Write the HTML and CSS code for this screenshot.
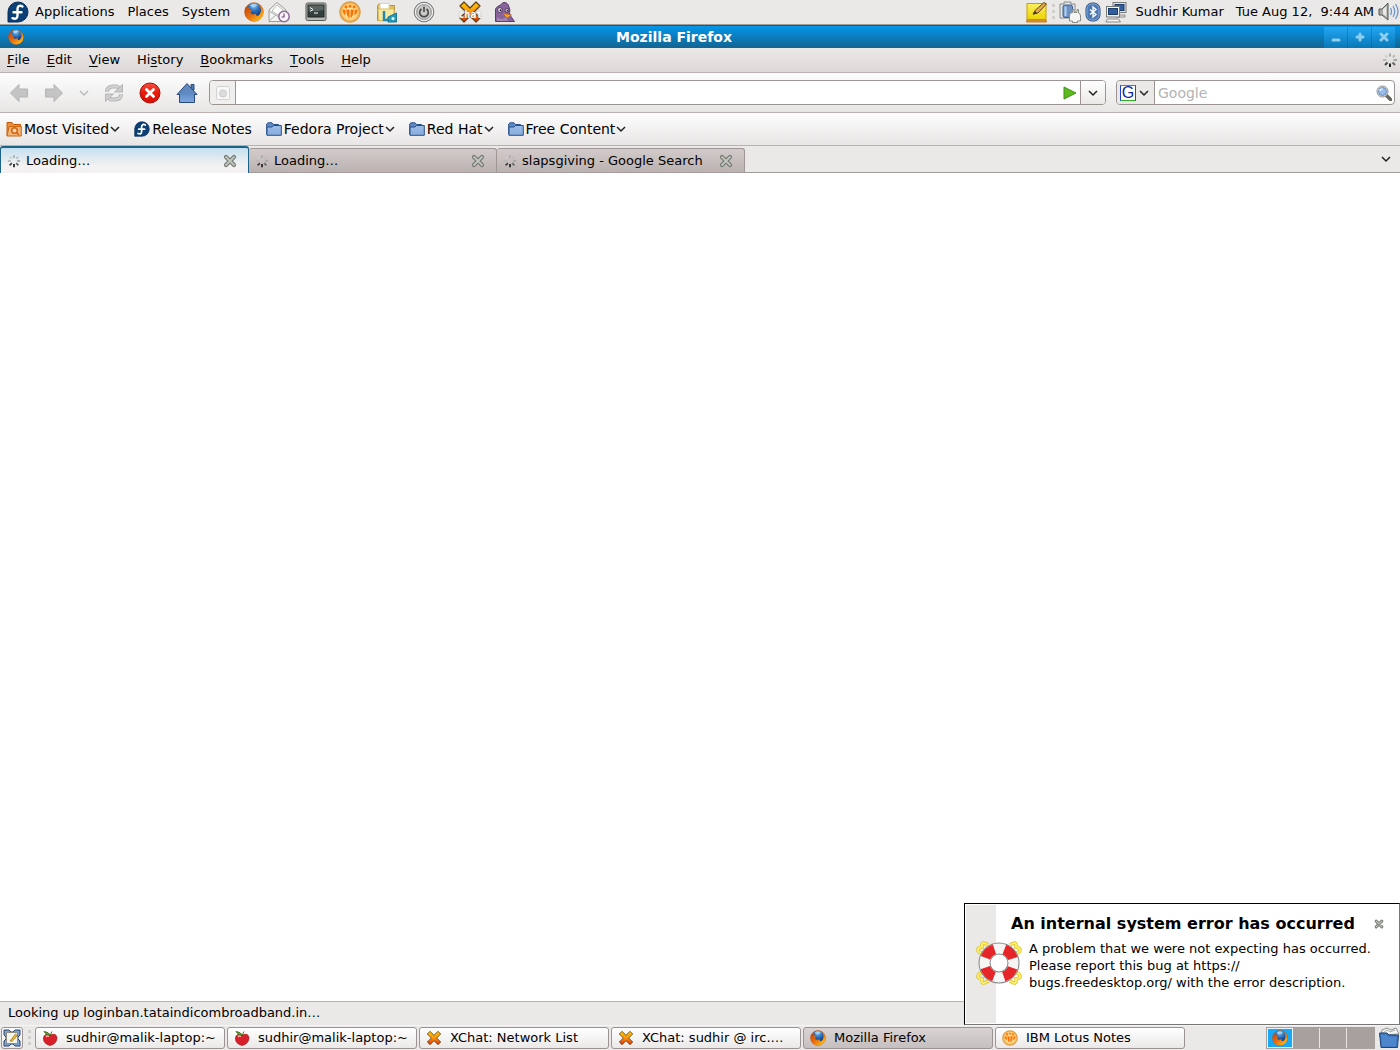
FILE: index.html
```html
<!DOCTYPE html>
<html lang="en">
<head>
<meta charset="utf-8">
<title>Mozilla Firefox</title>
<link rel="stylesheet" href="styles.css">
</head>
<body>
<svg class="sprite" aria-hidden="true">
  <defs>
    <linearGradient id="gOrange" x1="0" y1="0" x2="0" y2="1"><stop offset="0" stop-color="#ffc800"/><stop offset=".5" stop-color="#f99410"/><stop offset="1" stop-color="#e02a08"/></linearGradient>
    <linearGradient id="gFox" x1="0" y1="0" x2="1" y2="1"><stop offset="0" stop-color="#c2410b"/><stop offset=".5" stop-color="#e8720e"/><stop offset="1" stop-color="#ffd21e"/></linearGradient>
    <radialGradient id="gGlobe" cx=".5" cy=".2" r=".8"><stop offset="0" stop-color="#7cc0f0"/><stop offset=".5" stop-color="#2668b4"/><stop offset="1" stop-color="#0d2a66"/></radialGradient>
    <linearGradient id="gBlue" x1="0" y1="0" x2="0" y2="1"><stop offset="0" stop-color="#5c8bc8"/><stop offset="1" stop-color="#7ea6dc"/></linearGradient>
    <linearGradient id="gFolder" x1="0" y1="0" x2="0" y2="1"><stop offset="0" stop-color="#9dbce4"/><stop offset="1" stop-color="#86acdc"/></linearGradient>
    <linearGradient id="gRed" x1="0" y1="0" x2="0" y2="1"><stop offset="0" stop-color="#f85040"/><stop offset=".5" stop-color="#e61a0c"/><stop offset="1" stop-color="#d80d04"/></linearGradient>
    <radialGradient id="gLotus"><stop offset="0" stop-color="#fff3c0"/><stop offset=".6" stop-color="#ffdf90"/><stop offset="1" stop-color="#f8a848"/></radialGradient>
    <linearGradient id="gNote" x1="0" y1="0" x2="0" y2="1"><stop offset="0" stop-color="#fbf060"/><stop offset="1" stop-color="#edd400"/></linearGradient>
  </defs>
  <symbol id="fedora" viewBox="0 0 22 22"><path d="M1 21V11A10 10 0 1 1 11 21Z" fill="#0b3f75" stroke="#082f5c"/><path d="M15.500 5.500C12.500 3.800 10.500 5.200 10.500 8V14.500C10.500 17.500 8.500 18.500 5.500 17.200M6.500 11.300H14.500" fill="none" stroke="#fff" stroke-width="2.400" stroke-linecap="round"/></symbol>
  <symbol id="firefox" viewBox="0 0 20 20"><circle cx="10" cy="10" r="9.300" fill="url(#gFox)" stroke="#b8480c" stroke-width=".6"/><circle cx="10" cy="8.200" r="7.300" fill="url(#gGlobe)"/><path d="M1.500 5C3 6 4 4.500 5.500 5.500L4.800 7.500L8 8L6.300 10.500C8 13 11 12.500 12.500 11.300C11 14.500 14.500 15 16.500 11C17.500 8.500 17 6 15.500 3.500C18.500 5.500 19.600 8.500 19 12C17.500 21 4 21.500 1.200 12.500C.6 9.500.8 7 1.500 5Z" fill="url(#gFox)"/><path d="M6 3.500C8 1.500 12 1.500 13.500 3.500C11 4 10.500 6 8.500 5.500Z" fill="#9fd3f3"/></symbol>
  <symbol id="mail" viewBox="0 0 22 22"><path d="M1 9L9 1.500L18 9V20.500H1Z" fill="#f3f3f2" stroke="#989a96"/><path d="M4 10L9 4L15 9L10 14Z" fill="#fff" stroke="#babdb6"/><path d="M1 10L10 15.500L18 10M1 20L8 14" fill="none" stroke="#aaa"/><circle cx="16" cy="15.500" r="5.200" fill="#f7f3f8" stroke="#8c6c94" stroke-width="1.500"/><path d="M16 12.500V16H13.500" fill="none" stroke="#75507b" stroke-width="1.200"/></symbol>
  <symbol id="terminal" viewBox="0 0 22 20"><rect x="1" y="1" width="20" height="17.500" rx="1.500" fill="#b7b9b4" stroke="#555753"/><rect x="3" y="3" width="16" height="12" fill="#33403e" stroke="#1c2423"/><path d="M3.500 3.500H18.500V8Q10 10 3.500 9Z" fill="#5a6562"/><path d="M5 5.500L8 7.500L5 9.500M9 11H13" fill="none" stroke="#fff"/></symbol>
  <symbol id="lotus" viewBox="0 0 22 22"><circle cx="11" cy="11" r="10" fill="url(#gLotus)" stroke="#d9a04c" stroke-width="1.500"/><g fill="#ff7000"><circle cx="7" cy="6" r="1.500"/><circle cx="11" cy="5.200" r="1.500"/><circle cx="15" cy="6" r="1.500"/><path d="M3.500 8.500L6.500 9V14.500Q4 13 3.500 8.500ZM18.500 8.500L15.500 9V14.500Q18 13 18.500 8.500ZM7.300 8.500H10.500V17Q7.500 16 7.300 8.500ZM11.500 8.500H14.700Q14.500 16 11.500 17Z"/></g></symbol>
  <symbol id="yfolder" viewBox="0 0 22 22"><path d="M1.500 19.500V4.500L3 3H8L9.500 4.500H18.500V18Z" fill="#dfc060" stroke="#b69440"/><path d="M4 2.500H13V9H4Z" fill="#fff" stroke="#d8d2ba"/><path d="M2 8H18V18L3 20Z" fill="#f7e9a0" stroke="#dbbd5a"/><path d="M8 10V19H13" fill="none" stroke="#248bb0" stroke-width="2.500"/><path d="M12 21V16L20.500 12V21Z" fill="#299bb9" stroke="#157594"/><circle cx="17" cy="17.500" r="1.600" fill="#d8f4f8"/></symbol>
  <symbol id="power" viewBox="0 0 22 22"><circle cx="11" cy="11" r="9.800" fill="#bbb" stroke="#777"/><circle cx="11" cy="11" r="8.500" fill="none" stroke="#fafafa"/><circle cx="11" cy="11" r="7.300" fill="#c9c9c7" stroke="#999"/><path d="M8.500 8A4.300 4.300 0 1 0 13.500 8M11 5.500V11" fill="none" stroke="#4a4a4a" stroke-width="1.600"/></symbol>
  <symbol id="xchat" viewBox="0 0 24 22"><path d="M2 5L6 1L12 7L18 1L22 5L16 11L22 17L18 21L12 15L6 21L2 17L8 11Z" fill="url(#gOrange)" stroke="#624318" stroke-width="1.300" stroke-linejoin="round"/></symbol>
  <symbol id="pidgin" viewBox="0 0 22 22"><path d="M1.500 20.500V8Q3 5 6.500 4L9 1.500Q14 1 15 6Q16.500 9 15.500 12L17 15.500L20.500 20.500Z" fill="#88639a" stroke="#5c3d6e"/><path d="M3 16Q7 20 12 16L14 20H3Z" fill="#a286b0"/><circle cx="6" cy="9" r="2.300" fill="#fff" stroke="#513460"/><circle cx="13" cy="9.500" r="1.800" fill="#fff" stroke="#513460"/><circle cx="6.500" cy="9.200" r=".9"/><circle cx="13.300" cy="9.700" r=".8"/><path d="M9 12.500L17.500 14L13 17Z" fill="#f8a22c" stroke="#c66c10" stroke-width=".7"/></symbol>
  <symbol id="note" viewBox="0 0 22 22"><rect x="1" y="2.500" width="19" height="16" fill="url(#gNote)" stroke="#c4a000"/><path d="M1 19H20L20.500 21H.5Z" fill="#ef9a2c" stroke="#c17d11"/><path d="M7 13L9 9.500L18 1.500L20.500 3L12 12Z" fill="#dca850" stroke="#6f4a12"/><path d="M7 14L9 10L11 12Z" fill="#333"/></symbol>
  <symbol id="battery" viewBox="0 0 22 22"><path d="M5 3V1H12V3H16V17H1V3Z" fill="#e5e5e4" stroke="#888a85"/><rect x="4" y="4" width="9.500" height="12.500" rx="2" fill="#6c91c2" stroke="#3e608f"/><path d="M6.500 5.500V15" stroke="#b9d0ee" stroke-width="2"/><path d="M10.500 20V14Q11 11.500 13.500 11.500V8.500H15V11.500H18V8.500H19.500V12Q21.500 12.500 21.500 15V20H18.500V21.500H13.500V20Z" fill="#f5f5f4" stroke="#8b8d89"/></symbol>
  <symbol id="bluetooth" viewBox="0 0 16 20"><rect x="1" y="1" width="14" height="18" rx="6" fill="#4d79b4" stroke="#2a4f83"/><rect x="2" y="2" width="12" height="16" rx="5" fill="none" stroke="#87a9d5"/><path d="M5 7.500L11 12.500L8 15V5L11 7.500L5 12.500" fill="none" stroke="#fff" stroke-width="1.300"/></symbol>
  <symbol id="network" viewBox="0 0 22 22"><rect x="8" y="1.500" width="13" height="10" fill="#e4e4e2" stroke="#777974"/><rect x="10" y="3.500" width="9" height="6" fill="#315e9c" stroke="#1d3d6c"/><path d="M11 14H20V16H11Z" fill="#eee" stroke="#888"/><rect x="1.500" y="5.500" width="13" height="10.500" fill="#f1f1ef" stroke="#777974"/><rect x="3.500" y="7.500" width="9" height="6" fill="#315e9c" stroke="#1d3d6c"/><path d="M2.500 18H13.500L15.500 21H.8Z" fill="#f4f4f2" stroke="#888"/></symbol>
  <symbol id="speaker" viewBox="0 0 22 22"><path d="M1 8H4L10 2V19L4 14H1Z" fill="#a7a9a4" stroke="#555753"/><path d="M5 8L8.500 5V16L5 13Z" fill="#e8e8e6"/><path d="M12.500 7Q14.500 10.500 12.500 14M15 5Q18.500 10.500 15 16M17.500 3Q22.500 10.500 17.500 18" fill="none" stroke="#6d95cc" stroke-width="1.300"/></symbol>
  <symbol id="chevron" viewBox="0 0 10 10"><path d="M1 3L5 7L9 3" fill="none" stroke="currentColor" stroke-width="1.500"/></symbol>
  <symbol id="throbber" viewBox="0 0 16 16"><g fill="none" stroke-width="2"><path d="M8 1.500V4.500" stroke="#aaa"/><path d="M12.800 3.200L10.800 5.200" stroke="#bbb"/><path d="M15 8H11.500" stroke="#a5a5a5"/><path d="M10.500 10.500L13 13" stroke="#666"/><path d="M8 11.500V15" stroke="#222"/><path d="M5.500 10.500L3 13" stroke="#444"/><path d="M1 8H4.500" stroke="#b8b8b8"/><path d="M3.200 3.200L5.200 5.200" stroke="#ccc"/></g></symbol>
  <symbol id="close" viewBox="0 0 14 14"><path d="M3 3L11 11M11 3L3 11" stroke="#747871" stroke-width="4.200" stroke-linecap="round"/><path d="M3 3L11 11M11 3L3 11" stroke="#c3c8bf" stroke-width="1.800" stroke-linecap="round"/></symbol>
  <symbol id="arrow" viewBox="0 0 20 20"><path d="M1.500 10L10 1.500V6H18.500V14H10V18.500Z" fill="#c4c4c4" stroke="#b4b4b4" stroke-linejoin="round"/></symbol>
  <symbol id="reload" viewBox="0 0 20 20"><path d="M3 9Q3 3.500 9.500 3.500H13L15.500 5.500M17 11Q17 16.500 10.500 16.500H7L4.500 14.500" fill="none" stroke="#b6b6b6" stroke-width="4"/><path d="M3 9Q3 3.500 9.500 3.500H13L15.500 5.500M17 11Q17 16.500 10.500 16.500H7L4.500 14.500" fill="none" stroke="#d4d4d4" stroke-width="2"/><path d="M18.500 1.500V9H10.500ZM1.500 18.500V11H9.500Z" fill="#cdcdcd" stroke="#b6b6b6"/></symbol>
  <symbol id="stop" viewBox="0 0 22 22"><circle cx="11" cy="11" r="10" fill="url(#gRed)" stroke="#a40f08"/><path d="M7.500 7.500L14.500 14.500M14.500 7.500L7.500 14.500" stroke="#fff" stroke-width="2.800" stroke-linecap="round"/></symbol>
  <symbol id="home" viewBox="0 0 22 22"><path d="M3.500 20.500V11H18.500V20.500Z" fill="url(#gBlue)" stroke="#274b7c"/><path d="M15 2.500H18V8H15Z" fill="#4f7db8" stroke="#274b7c"/><path d="M1 12.500L11 1.500L21 12.500Z" fill="#6089c0" stroke="#274b7c" stroke-linejoin="round"/><path d="M4 11.500H18V20H4Z" fill="url(#gBlue)"/></symbol>
  <symbol id="folder" viewBox="0 0 16 14"><path d="M.7 12.500V2L2 .8H6L7.500 2.500H12.500V5" fill="#5f89c0" stroke="#274f8c"/><path d="M1 13.300V5H6L7.500 3.500H15.300V13.300Z" fill="url(#gFolder)" stroke="#274f8c"/></symbol>
  <symbol id="visited" viewBox="0 0 16 16"><path d="M1 15V1.500H6L7.500 3.500H14.500V5" fill="#ee8d3c" stroke="#c45a08"/><path d="M1 15L3 5.500H15.300V15Z" fill="#f5b376" stroke="#ce6711"/><circle cx="8.500" cy="9.500" r="2.800" fill="#fff" fill-opacity=".4" stroke="#ce6711" stroke-width="1.500"/><path d="M10.500 11.500L13 14" stroke="#ce6711" stroke-width="1.500"/></symbol>
  <symbol id="page" viewBox="0 0 16 16"><rect x="1.500" y="1.500" width="13" height="13" rx="1" fill="#f7f7f7" stroke="#d2d2d2"/><circle cx="8" cy="8.500" r="3.500" fill="#ddd" stroke="#c9c9c9"/></symbol>
  <symbol id="go" viewBox="0 0 14 14"><path d="M1 1L13 7L1 13Z" fill="#5cba1c" stroke="#3f9411"/></symbol>
  <symbol id="search" viewBox="0 0 16 16"><path d="M10 10L14.500 14.500" stroke="#646660" stroke-width="3.500" stroke-linecap="round"/><circle cx="6.500" cy="6.500" r="5.500" fill="#eee" stroke="#8b8d89"/><circle cx="6.500" cy="6.500" r="4" fill="#9abce8" stroke="#5f8ac2"/><path d="M4 6Q4 4 6.500 4" stroke="#eef6ff" fill="none" stroke-width="1.500"/></symbol>
  <symbol id="apple" viewBox="0 0 16 16"><path d="M8 5Q14.500 2.500 15 8Q14.500 14 8 15.500Q1 13.500 1.500 8Q2 3 8 5Z" fill="#d8202a" stroke="#9f1018" stroke-width=".7"/><path d="M4 7Q5 5.500 7 6.500" fill="none" stroke="#ffa3a0" stroke-width="1.500"/><path d="M8 5Q7 2 2 1.500Q3 4.500 8 5L10 1.500" fill="#67a73c" stroke="#487e22"/></symbol>
  <symbol id="desktop" viewBox="0 0 18 18"><path d="M1 1H6L8 3H10L12 1H17V6L15 8V10L17 12V17H12L10 15H8L6 17H1V12L3 10V8L1 6Z" fill="#7fa3d4" stroke="#28456f"/><rect x="3.500" y="3.500" width="11" height="11" fill="#f5f5ec" stroke="#8c8e85"/><path d="M7 12L12.500 5L14.500 6.500L9 12.500Z" fill="#edb52c" stroke="#7e6211" stroke-width=".6"/></symbol>
  <symbol id="trash" viewBox="0 0 22 22"><path d="M3 8L4 3L9 1L13 3L18 1L21 7Z" fill="#f5f5f3" stroke="#8d908a"/><path d="M5 6L9 3L12 5L17 3" fill="none" stroke="#aaa"/><path d="M1.500 6H9L11 8H20.500L19.500 20.500H3Z" fill="#3a72b8" stroke="#1d4579"/><path d="M3 7.500H8L10 9.500H19L18 19.500H4Z" fill="#4d86cc"/></symbol>
  <symbol id="lifebuoy" viewBox="0 0 46 46"><g fill="none"><path d="M12 5Q5 0 6 7Q0 8 3 12L8 15M34 5Q41 0 40 7Q46 8 43 12L38 15M12 41Q5 46 6 39Q0 38 3 34L8 31M34 41Q41 46 40 39Q46 38 43 34L38 31" stroke="#dcc01c" stroke-width="3.500"/><path d="M12 5Q5 0 6 7Q0 8 3 12L8 15M34 5Q41 0 40 7Q46 8 43 12L38 15M12 41Q5 46 6 39Q0 38 3 34L8 31M34 41Q41 46 40 39Q46 38 43 34L38 31" stroke="#fff06a" stroke-width="2"/></g><circle cx="23" cy="23" r="14.500" fill="#fff" stroke="#85878a" stroke-width="12"/><circle cx="23" cy="23" r="14.500" fill="none" stroke="#f5f5f3" stroke-width="10"/><circle cx="23" cy="23" r="14.500" fill="none" stroke="#e52528" stroke-width="10" stroke-dasharray="12.700 10.077" stroke-dashoffset="-5"/></symbol>
</svg>

<header class="panel">
  <nav class="panel-menus" aria-label="Desktop">
    <svg class="i22"><use href="#fedora"/></svg>
    <button>Applications</button><button>Places</button><button>System</button>
  </nav>
  <div class="launchers">
    <button class="launch-firefox" aria-label="Firefox"><svg class="i20"><use href="#firefox"/></svg></button>
    <button class="launch-mail" aria-label="Mail"><svg class="i22"><use href="#mail"/></svg></button>
    <button class="launch" aria-label="Terminal"><svg class="i22"><use href="#terminal"/></svg></button>
    <button class="launch-notes" aria-label="Notes"><svg class="i22"><use href="#lotus"/></svg></button>
    <button class="launch" aria-label="Files"><svg class="i22"><use href="#yfolder"/></svg></button>
    <button class="launch" aria-label="Power"><svg class="i22"><use href="#power"/></svg></button>
    <button class="launch-chat"><svg class="i24"><use href="#xchat"/></svg><span class="chat-label">chat</span></button>
    <button class="launch-pidgin" aria-label="Pidgin"><svg class="i22"><use href="#pidgin"/></svg></button>
  </div>
  <div class="tray">
    <svg class="i22"><use href="#note"/></svg>
    <span class="grip"></span>
    <svg class="i22"><use href="#battery"/></svg>
    <svg class="i16x20"><use href="#bluetooth"/></svg>
    <svg class="i22"><use href="#network"/></svg>
    <button class="user">Sudhir Kumar</button>
    <button class="clock">Tue Aug 12,&nbsp; 9:44 AM</button>
    <svg class="i22"><use href="#speaker"/></svg>
  </div>
</header>

<section class="window">
  <div class="titlebar">
    <svg class="i16"><use href="#firefox"/></svg>
    <h1>Mozilla Firefox</h1>
    <div class="window-buttons">
      <button aria-label="Minimize"><svg class="i12" viewBox="0 0 12 12"><path d="M3 9H9" class="wb"/></svg></button>
      <button aria-label="Maximize"><svg class="i12" viewBox="0 0 12 12"><path d="M6 3V9M3 6H9" class="wb"/></svg></button>
      <button aria-label="Close window"><svg class="i12" viewBox="0 0 12 12"><path d="M3 3L9 9M9 3L3 9" class="wb"/></svg></button>
    </div>
  </div>
  <nav class="menubar" aria-label="Menu">
    <button><u>F</u>ile</button><button><u>E</u>dit</button><button><u>V</u>iew</button><button>Hi<u>s</u>tory</button><button><u>B</u>ookmarks</button><button><u>T</u>ools</button><button><u>H</u>elp</button>
    <svg class="i16 activity"><use href="#throbber"/></svg>
  </nav>
  <div class="toolbar">
    <div class="nav-buttons">
      <button aria-label="Back"><svg class="i20"><use href="#arrow"/></svg></button>
      <button aria-label="Forward"><svg class="i20 flip"><use href="#arrow"/></svg></button>
      <button class="faded" aria-label="History"><svg class="i10"><use href="#chevron"/></svg></button>
      <button aria-label="Reload"><svg class="i20"><use href="#reload"/></svg></button>
      <button aria-label="Stop"><svg class="i22"><use href="#stop"/></svg></button>
      <button aria-label="Home"><svg class="i22"><use href="#home"/></svg></button>
    </div>
    <form class="location">
      <span class="site"><svg class="i16"><use href="#page"/></svg></span>
      <input type="text" aria-label="Location">
      <button type="button" class="go" aria-label="Go"><svg class="i14"><use href="#go"/></svg></button>
      <button type="button" class="drop" aria-label="Show history"><svg class="i10"><use href="#chevron"/></svg></button>
    </form>
    <form class="search">
      <button type="button" class="engine" aria-label="Search engine"><span class="g-logo">G</span><svg class="i10"><use href="#chevron"/></svg></button>
      <input type="text" aria-label="Search" placeholder="Google">
      <button type="button" class="find" aria-label="Search"><svg class="i16"><use href="#search"/></svg></button>
    </form>
  </div>
  <nav class="bookmarks" aria-label="Bookmarks">
    <button><svg class="i16"><use href="#visited"/></svg>Most Visited<svg class="i10"><use href="#chevron"/></svg></button>
    <a href="#"><svg class="i16"><use href="#fedora"/></svg>Release Notes</a>
    <button><svg class="i16"><use href="#folder"/></svg>Fedora Project<svg class="i10"><use href="#chevron"/></svg></button>
    <button><svg class="i16"><use href="#folder"/></svg>Red Hat<svg class="i10"><use href="#chevron"/></svg></button>
    <button><svg class="i16"><use href="#folder"/></svg>Free Content<svg class="i10"><use href="#chevron"/></svg></button>
  </nav>
  <div class="tabs">
    <div class="tab active"><svg class="i14"><use href="#throbber"/></svg><span>Loading…</span><button aria-label="Close tab"><svg class="i14"><use href="#close"/></svg></button></div>
    <div class="tab"><svg class="i14"><use href="#throbber"/></svg><span>Loading…</span><button aria-label="Close tab"><svg class="i14"><use href="#close"/></svg></button></div>
    <div class="tab"><svg class="i14"><use href="#throbber"/></svg><span>slapsgiving - Google Search</span><button aria-label="Close tab"><svg class="i14"><use href="#close"/></svg></button></div>
    <button class="all-tabs" aria-label="List all tabs"><svg class="i10"><use href="#chevron"/></svg></button>
  </div>
  <main class="page"></main>
  <div class="status">Looking up loginban.tataindicombroadband.in…</div>

  <aside class="notice" role="alert">
    <div class="notice-body">
      <h2>An internal system error has occurred</h2>
      <button aria-label="Dismiss"><svg class="i10" viewBox="0 0 14 14"><use href="#close"/></svg></button>
      <svg class="buoy"><use href="#lifebuoy"/></svg>
      <p>A problem that we were not expecting has occurred.<br>Please report this bug at https://<br>bugs.freedesktop.org/ with the error description.</p>
    </div>
  </aside>
</section>

<footer class="taskbar">
  <button class="show-desktop" aria-label="Show desktop"><svg class="i18"><use href="#desktop"/></svg></button>
  <span class="grip"></span>
  <div class="tasks">
    <button class="task"><svg class="i16"><use href="#apple"/></svg><span>sudhir@malik-laptop:~</span></button>
    <button class="task"><svg class="i16"><use href="#apple"/></svg><span>sudhir@malik-laptop:~</span></button>
    <button class="task"><svg class="i16"><use href="#xchat"/></svg><span>XChat: Network List</span></button>
    <button class="task"><svg class="i16"><use href="#xchat"/></svg><span>XChat: sudhir @ irc.…</span></button>
    <button class="task current"><svg class="i16"><use href="#firefox"/></svg><span>Mozilla Firefox</span></button>
    <button class="task"><svg class="i16"><use href="#lotus"/></svg><span>IBM Lotus Notes</span></button>
  </div>
  <div class="pager">
    <button class="on" aria-label="Workspace 1"><svg class="i16"><use href="#firefox"/></svg></button><button aria-label="Workspace 2"></button><button aria-label="Workspace 3"></button><button aria-label="Workspace 4"></button>
  </div>
  <button class="trash" aria-label="Trash"><svg class="i22"><use href="#trash"/></svg></button>
</footer>
</body>
</html>
```
FILE: styles.css
```css
* { box-sizing: border-box; }
body {
  margin: 0;
  min-height: 100vh;
  display: flex;
  flex-direction: column;
  background: #ebe9e8;
  color: #000;
  font: 13px/18px "DejaVu Sans", sans-serif;
}
button {
  font: inherit;
  color: inherit;
  background: none;
  border: 0;
  padding: 0;
  display: flex;
  align-items: center;
  flex: none;
  white-space: nowrap;
}
input { font: inherit; border: 0; outline: 0; padding: 0; background: none; flex: 1; min-width: 0; }
svg { flex: none; display: block; }
.sprite { width: 0; height: 0; position: absolute; }
.i10 { width: 10px; height: 10px; color: #222; }
.i12 { width: 12px; height: 12px; }
.i14 { width: 14px; height: 14px; }
.i16 { width: 16px; height: 16px; }
.i18 { width: 18px; height: 18px; }
.i20 { width: 20px; height: 20px; }
.i22 { width: 22px; height: 22px; }
.i24 { width: 24px; height: 22px; }
.i16x20 { width: 16px; height: 20px; }
.flip { transform: scaleX(-1); }
.grip { width: 3px; height: 16px; flex: none; background: repeating-linear-gradient(#d2cfcd 0 3px, transparent 3px 6px); }

.panel {
  height: 25px;
  display: flex;
  align-items: center;
  padding: 0 0 1px 7px;
  border-bottom: 1px solid #9d9a98;
}
.panel-menus { display: flex; align-items: center; gap: 13px; }
.panel-menus svg { margin-right: -7px; }
.launchers { display: flex; align-items: center; margin-left: 14px; }
.launch-mail { margin-left: 4px; }
.launch { margin-left: 15px; }
.launch-notes { margin-left: 12px; }
.launch-chat { position: relative; margin-left: 23px; }
.chat-label {
  position: absolute;
  inset: 9px 0 auto;
  color: #fff;
  font: bold 10px/10px "DejaVu Sans Mono", monospace;
  text-align: center;
  text-shadow: 0 0 1px #777;
}
.launch-pidgin { margin-left: 12px; }
.tray { display: flex; align-items: center; gap: 4px; margin-left: auto; }
.user { margin: 0 8px 0 5px; }

.window { position: relative; flex: 1; display: flex; flex-direction: column; }
.titlebar {
  height: 23px;
  display: flex;
  align-items: center;
  padding: 0 5px 0 8px;
  background: linear-gradient(#0495ea, #136490);
  border-top: 1px solid #075f93;
  color: #fff;
}
.titlebar h1 { flex: 1; margin: 0; text-align: center; font-size: 14px; line-height: 18px; }
.window-buttons { display: flex; gap: 1px; }
.window-buttons button { width: 23px; height: 21px; justify-content: center; background: linear-gradient(#22a6f3, #0878b6); }
.wb { stroke: #8ccdf0; stroke-width: 3; stroke-linecap: round; }

.menubar {
  height: 25px;
  display: flex;
  align-items: center;
  gap: 17px;
  padding: 0 2px 0 7px;
  background: linear-gradient(#ebe9e8, #dcd8d7);
  border-bottom: 1px solid #b9b2b0;
}
.menubar u { text-underline-offset: 2px; }
.activity { margin-left: auto; }

.toolbar {
  height: 40px;
  display: flex;
  align-items: center;
  padding: 0 5px 0 9px;
  background: linear-gradient(#fdfdfd, #e8e6e5);
  border-bottom: 1px solid #b9b2b0;
}
.nav-buttons { display: flex; align-items: center; gap: 15px; margin-right: 11px; }
.nav-buttons .faded svg { color: #bbb; }
.location, .search {
  display: flex;
  align-items: stretch;
  height: 25px;
  margin: 0;
  background: #fff;
  border: 1px solid #9b9492;
  border-radius: 4px;
  overflow: hidden;
}
.location { flex: 1; margin-right: 10px; }
.search { width: 279px; }
.site { display: flex; align-items: center; justify-content: center; width: 26px; background: #f0efee; border-right: 1px solid #9b9492; }
.go { padding: 0 3px; }
.drop { width: 25px; justify-content: center; border-left: 1px solid #9b9492; background: linear-gradient(#fff, #ebe9e8); }
.engine { width: 38px; gap: 3px; padding-left: 3px; background: #ebe9e8; border-right: 1px solid #9b9492; }
.g-logo {
  width: 16px;
  height: 16px;
  border: 1px solid #2fae25;
  border-left-color: #1b3fd0;
  border-right-color: #d01818;
  background: #fff;
  color: #0b2a9c;
  font: 16px/14px "Liberation Sans", sans-serif;
  text-align: center;
}
.search input { padding-left: 3px; font-size: 14px; }
.search input::placeholder { color: #b3b3b3; opacity: 1; }
.find { padding: 0 2px; }

.bookmarks {
  height: 33px;
  display: flex;
  align-items: center;
  gap: 14px;
  padding: 0 6px;
  font-size: 14px;
  background: linear-gradient(#fdfdfd, #e8e6e5);
  border-bottom: 1px solid #b9b2b0;
}
.bookmarks a { display: flex; align-items: center; color: inherit; text-decoration: none; }
.bookmarks svg:first-child { margin-right: 2px; }
.bookmarks svg.i10 { margin-left: 1px; }

.tabs { height: 27px; display: flex; align-items: flex-end; border-bottom: 1px solid #a39c9a; }
.tab {
  width: 248px;
  height: 24px;
  display: flex;
  align-items: center;
  gap: 5px;
  padding: 0 11px 0 6px;
  background: linear-gradient(#d3cbcb, #bbb1b1);
  border: 1px solid #a09795;
  border-width: 1px 1px 0 0;
  border-radius: 3px 3px 0 0;
}
.tab span { flex: 1; white-space: nowrap; }
.tab.active {
  width: 249px;
  height: 27px;
  margin-bottom: -1px;
  background: linear-gradient(#c5e0f0, #f3f1f1 70%);
  border: 1px solid #1d6388;
  border-width: 2px 1px 0;
}
.all-tabs { margin: 0 9px 8px auto; }

.page { flex: 1; background: #fff; }
.status { height: 24px; padding: 2px 8px; border-top: 1px solid #b9b2b0; }

.notice {
  position: absolute;
  right: 0;
  bottom: 0;
  width: 436px;
  height: 122px;
  padding: 1px;
  border: 1px solid #000;
  border-right-color: #777;
  border-bottom-color: #777;
  background: #fff;
}
.notice-body {
  height: 100%;
  display: grid;
  grid-template-columns: 44px 1fr auto;
  column-gap: 9px;
  align-content: start;
  padding: 8px 0 0 10px;
  background: linear-gradient(90deg, #ebe9e8 30px, #fff 30px);
}
.notice h2 { grid-column: 1 / 3; margin: 0 0 0 35px; font-size: 16px; line-height: 22px; white-space: nowrap; }
.notice button { margin-right: 14px; }
.buoy { width: 46px; height: 46px; margin-top: 5px; }
.notice p { grid-column: 2 / 4; margin: 5px 0 0; line-height: 17px; white-space: nowrap; }

.taskbar { height: 25px; display: flex; align-items: center; padding: 0 0 0 1px; border-top: 1px solid #f6f5f5; }
.show-desktop { width: 22px; height: 22px; justify-content: center; }
.show-desktop, .task {
  background: linear-gradient(#fff, #ebe9e8);
  border: 1px solid #9b9492;
  border-radius: 3px;
}
.taskbar .grip { margin: 0 4px 0 5px; }
.tasks { display: flex; gap: 2px; flex: 0 1 1150px; min-width: 0; }
.task { flex: 1 1 0; min-width: 0; height: 22px; padding: 0 6px; gap: 8px; }
.task span { overflow: hidden; text-overflow: ellipsis; }
.task.current { background: linear-gradient(#d9d3d3, #c6bfbf); }
.pager { display: flex; gap: 1px; margin-left: auto; height: 22px; padding: 1px; background: #a8a09e; }
.pager button { width: 26px; justify-content: center; border-right: 1px solid #e8e5e4; }
.pager button:last-child { border: 0; }
.pager .on { background: #18a8f8; border: 1px solid #e8f4fa; }
.trash { margin-left: 3px; }
```
